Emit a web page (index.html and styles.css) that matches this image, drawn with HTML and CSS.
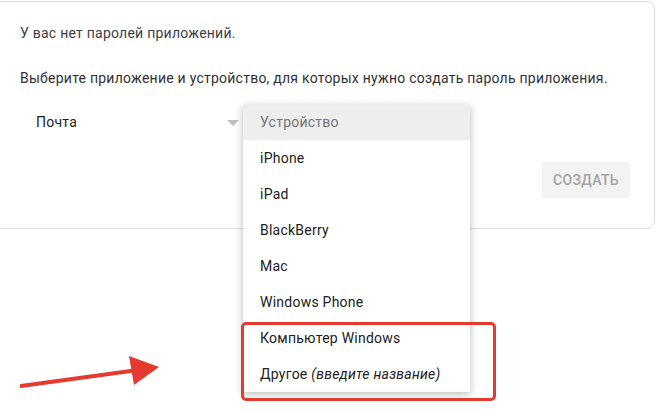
FILE: index.html
```html
<!DOCTYPE html>
<html lang="ru">
<head>
<meta charset="utf-8">
<link rel="stylesheet" href="styles.css">
</head>
<body>
<div class="page">
  <div class="card">
    <p class="line first">У вас нет паролей приложений.</p>
    <p class="line second">Выберите приложение и устройство, для которых нужно создать пароль приложения.</p>
    <div class="selects">
      <div class="select">
        <span class="select-value">Почта</span>
        <span class="caret"></span>
      </div>
    </div>
    <div class="actions">
      <button class="create">СОЗДАТЬ</button>
    </div>
    <ul class="menu">
      <li class="menu-head">Устройство</li>
      <li>iPhone</li>
      <li>iPad</li>
      <li>BlackBerry</li>
      <li>Mac</li>
      <li>Windows Phone</li>
      <li>Компьютер Windows</li>
      <li>Другое <em>(введите название)</em></li>
    </ul>
    <div class="highlight"></div>
  </div>
  <svg class="arrow" width="150" height="40" viewBox="0 0 150 40">
    <line x1="1" y1="36" x2="118" y2="20" stroke="#e53a30" stroke-width="4" stroke-linecap="round"/>
    <polygon points="109,6 139,17 114,35" fill="#e53a30"/>
  </svg>
</div>
</body>
</html>
```
FILE: styles.css
```css
html, body {
  margin: 0;
  padding: 0;
  background: #fff;
}
.page {
  position: relative;
  width: 662px;
  height: 412px;
  overflow: hidden;
  font-family: Roboto, "Noto Sans", Arial, sans-serif;
  font-size: 14px;
  letter-spacing: 0.24px;
}
.card {
  position: relative;
  margin: 1px 7px 0 -10px;
  border: 1px solid #dadce0;
  border-radius: 8px;
  padding: 21px 24px 30px 29px;
  display: flex;
  flex-direction: column;
}
.line {
  margin: 0;
  line-height: 20px;
  color: #3c4043;
}
.second {
  margin-top: 25px;
  color: #303134;
}
.selects {
  margin-top: 24px;
  display: flex;
}
.select {
  width: 219px;
  height: 20px;
  display: flex;
  align-items: center;
  justify-content: space-between;
}
.select-value {
  padding-left: 16px;
  color: #202124;
  line-height: 20px;
}
.caret {
  width: 0;
  height: 0;
  border-left: 6px solid transparent;
  border-right: 6px solid transparent;
  border-top: 6px solid #bdbdbd;
  margin-top: 1px;
}
.actions {
  margin-top: 30px;
  display: flex;
  justify-content: flex-end;
}
.create {
  width: 88px;
  height: 36px;
  border: none;
  border-radius: 3px;
  background: #f3f3f3;
  color: #a4a4a4;
  font-family: Roboto, "Noto Sans", Arial, sans-serif;
  font-size: 14px;
  font-weight: 500;
  letter-spacing: 0.3px;
  padding: 0;
}
.menu {
  position: absolute;
  left: 252px;
  top: 103px;
  width: 227px;
  margin: 0;
  padding: 0;
  list-style: none;
  background: #fff;
  box-shadow: 0 2px 8px rgba(0, 0, 0, 0.28);
  z-index: 2;
}
.menu li {
  height: 36px;
  line-height: 36px;
  padding-left: 17px;
  color: #212121;
}
.menu li.menu-head {
  height: 35px;
  line-height: 35px;
  background: #eeeeee;
  color: #757575;
}
.menu em {
  font-style: italic;
}
.highlight {
  position: absolute;
  left: 250px;
  top: 320px;
  width: 249px;
  height: 73px;
  border: 3px solid #e53a30;
  border-radius: 5px;
  z-index: 3;
}
.arrow {
  position: absolute;
  left: 20px;
  top: 350px;
}
```
